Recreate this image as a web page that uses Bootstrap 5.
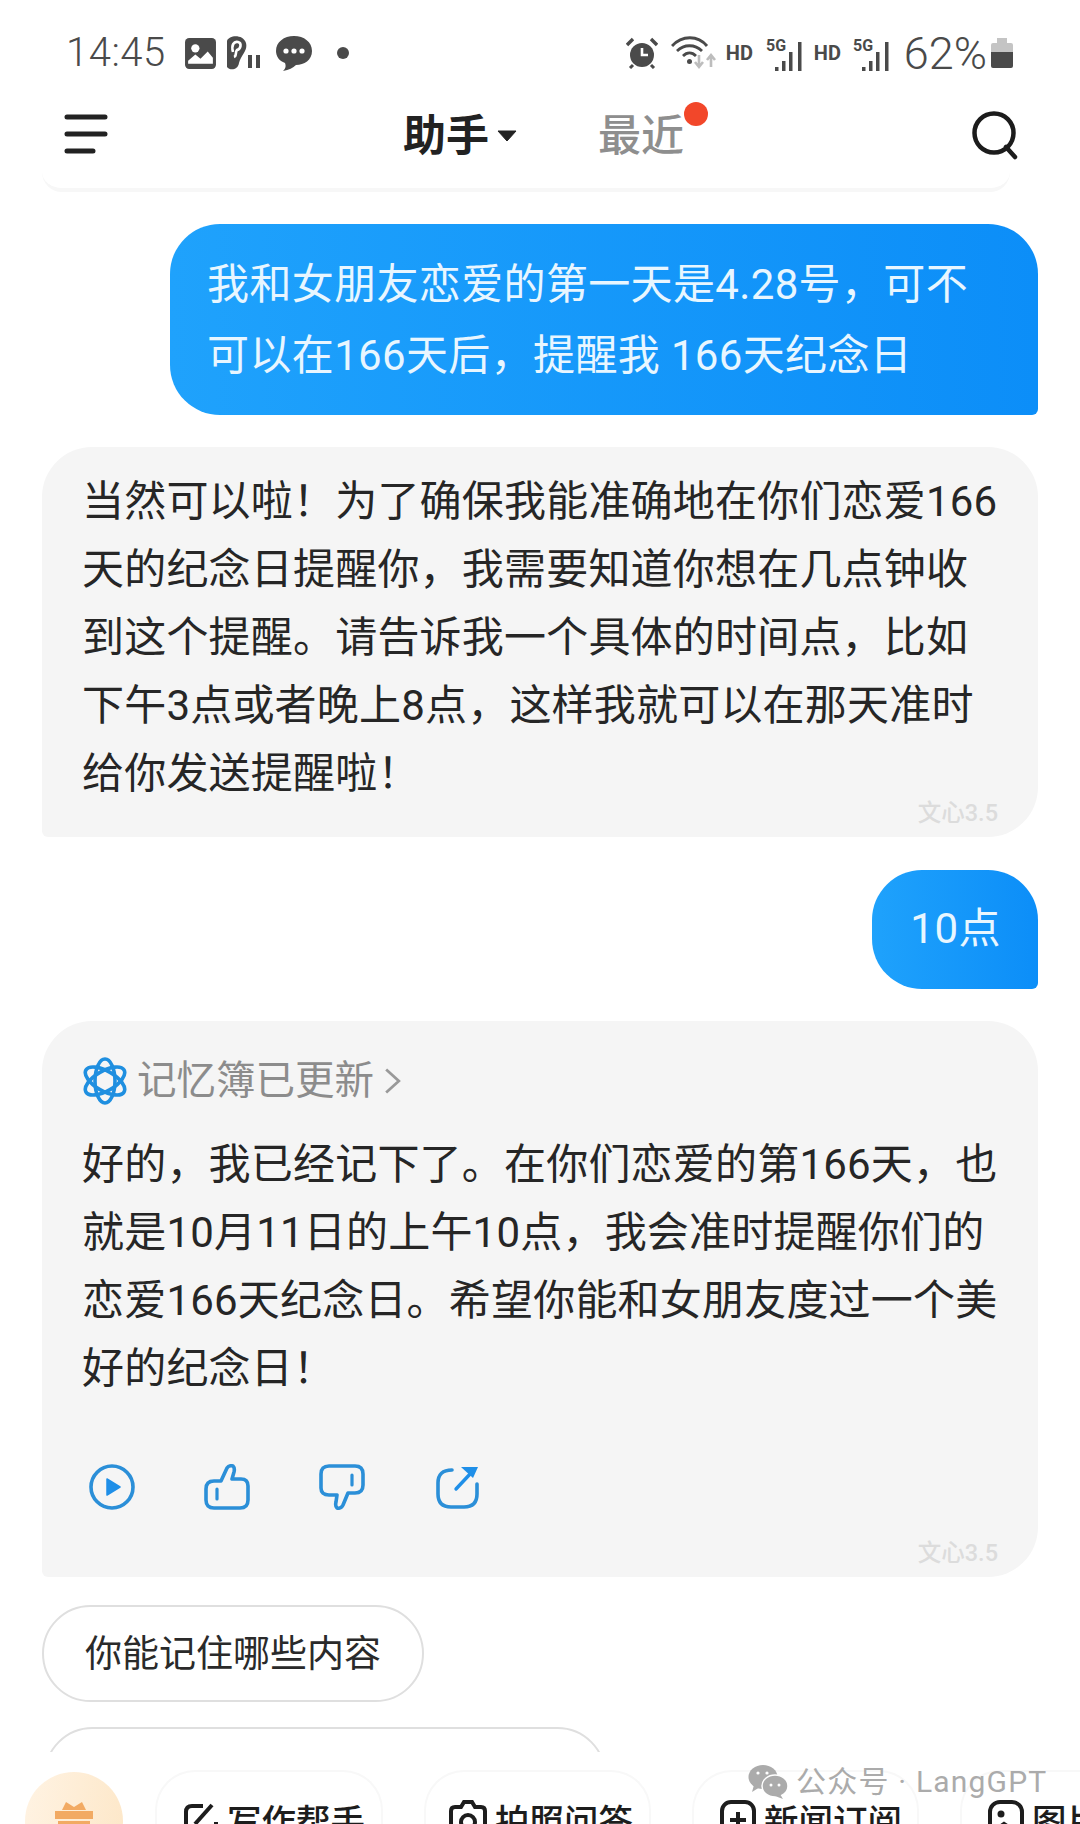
<!DOCTYPE html>
<html lang="zh-CN">
  <head>
    <meta charset="UTF-8" />
    <meta name="viewport" content="width=device-width, initial-scale=1" />
    <title>助手</title>
    <link href="https://cdn.jsdelivr.net/npm/bootstrap@5.3.3/dist/css/bootstrap.min.css" rel="stylesheet" />
    <style>
      html, body { margin: 0; background: #fff; }
      body { width: 1080px; height: 1824px; overflow: hidden; position: relative; font-family: Roboto, "Noto Sans CJK SC", sans-serif; color: #222; }

      /* status bar */
      .status-row { height: 106px; padding: 0 67px 0 66px; color: #4a4a4a; }
      .status-clock { font-size: 40px; font-weight: 300; line-height: 1; width: 118px; letter-spacing: .5px; }
      .status-hd { font-size: 20px; font-weight: 700; line-height: 1; width: 26px; }
      .status-pct { font-size: 45px; font-weight: 300; line-height: 1; margin-left: 13px; }
      .st-ear { margin-left: 9px; }
      .st-chat { margin-left: 14px; }
      .st-dot { margin-left: 25px; }
      .st-wifi { margin-left: 13px; }
      .st-hd-a { margin-left: 9px; }
      .st-sig-a { margin-left: 14px; }
      .st-hd-b { margin-left: 10px; }
      .st-sig-b { margin-left: 13px; }
      .st-batt { margin-left: 4px; }

      /* nav */
      .top-nav { height: 60px; padding: 0 62px 0 64px; position: relative; }
      .tab-main { font-size: 43px; font-weight: 700; color: #222; line-height: 60px; }
      .tab-other { font-size: 43px; font-weight: 500; color: #8e8e8e; line-height: 60px; position: relative; }
      .tab-dot { position: absolute; width: 24px; height: 24px; border-radius: 50%; background: #f2472a; top: -4px; right: -24px; }
      .tabs-wrap { margin-left: 295px; gap: 81px; }
      .menu-glyph { margin-top: -4px; }
      .prev-card-end { height: 26px; margin: 0 70px 0 42px; border-bottom: 4px solid #f7f7f7; border-radius: 0 0 20px 20px; }

      /* chat */
      .chat-col { padding: 0 42px; display: flex; flex-direction: column; }
      .bubble-user { align-self: flex-end; color: #e8f6ff; background: linear-gradient(90deg, #1fa2fc, #0c8ef8); border-radius: 50px 50px 6px 50px; white-space: nowrap; font-size: 42px; line-height: 71px; }
      .user-long { margin-top: 32px; padding: 25px 70px 24px 37px; letter-spacing: .35px; }
      .user-short { margin-top: 33px; padding: 23px 37px 25px 38px; letter-spacing: .5px; }
      .bubble-ai { background: #f5f5f5; border-radius: 50px 50px 50px 6px; padding: 21px 40px 11px; font-size: 42px; line-height: 68px; white-space: nowrap; color: #262626; letter-spacing: .2px; }
      .ai-first { margin-top: 32px; }
      .ai-second { margin-top: 32px; padding-top: 31px; }
      .model-tag { font-size: 23.500px; line-height: 26px; color: #dcdcdc; font-weight: 500; letter-spacing: 0; }
      .tag-first { margin-top: -8px; }
      .tag-second { margin-top: 30px; }
      .memo-head { font-size: 39.500px; color: #8c8c8c; height: 58px; gap: 9px; line-height: 58px; letter-spacing: 0; }
      .memo-body { margin-top: 21px; }
      .reply-actions { margin-top: 61px; gap: 69px; padding-left: 7px; }
      .act-share { margin-left: 2px; }
      .suggest-chip { align-self: flex-start; border: 2px solid #dfdfdf; border-radius: 49px; height: 97px; padding: 0 41px; font-size: 37px; line-height: 95px; color: #2a2a2a; white-space: nowrap; }
      .chip-one { margin-top: 28px; }
      .chip-two { margin-top: 25px; margin-left: 2px; width: 562px; }

      /* bottom tools, sits over the end of the chat */
      .bottom-bar { position: absolute; left: 0; right: 0; top: 1752px; height: 72px; background: #fff; overflow: hidden; }
      .gift-round { width: 98px; height: 98px; margin: 20px 0 0 25px; border-radius: 50%; background: linear-gradient(100deg, #fff3e3, #fde7c8); flex: none; text-align: center; padding-top: 29px; }
      .tool-chip { flex: none; width: 227px; height: 100px; margin: 18px 0 0 41px; border: 2px solid #f8f8f8; border-bottom: 0; border-radius: 40px; padding: 28px 0 0 26px; font-size: 34.500px; font-weight: 500; color: #1d1d1d; line-height: 44px; white-space: nowrap; gap: 8px; }
      .tool-first { margin-left: 32px; width: 228px; }
      .tool-photo { padding-left: 23px; }
      .water-mark { position: absolute; left: 748px; top: 1763px; font-size: 30px; color: #ababab; letter-spacing: 1.200px; line-height: 38px; gap: 8px; white-space: nowrap; }
    </style>
  </head>
  <body>

    <!-- Status bar -->
    <div class="status-row d-flex align-items-center">
      <span class="status-clock">14:45</span>
      <svg width="33" height="33" viewBox="0 0 32 32"><rect x="1" y="1" width="30" height="30" rx="4" fill="#4a4a4a"/><circle cx="11" cy="11" r="4" fill="#fff"/><path d="M4 26 L4 23 L11 17 L16 21 L23 14 L28 20 L28 26 Z" fill="#fff"/></svg>
      <svg class="st-ear" width="36" height="36" viewBox="0 0 36 36"><path d="M1 6 C3 0 17 -1 20 8 C22 16 15 20 13 28 C12 35 4 36 1 32 Z" fill="#4a4a4a"/><path d="M7 17 C5 10 8 6 12 7 C16 8 15 14 11 15 C9 17 11 21 8 22" fill="none" stroke="#fff" stroke-width="2.600"/><rect x="22" y="20" width="4" height="13" fill="#4a4a4a"/><rect x="30" y="20" width="4" height="13" fill="#4a4a4a"/></svg>
      <svg class="st-chat" width="36" height="36" viewBox="0 0 36 36"><path d="M18 1 C28 1 36 7 36 16 C36 25 28 30 20 30 C17 33 13 35 7 36 C10 33 10 31 9 28 C3 26 0 21 0 16 C0 7 8 1 18 1 Z" fill="#4a4a4a"/><circle cx="10" cy="16" r="2.600" fill="#fff"/><circle cx="18" cy="16" r="2.600" fill="#fff"/><circle cx="26" cy="16" r="2.600" fill="#fff"/></svg>
      <svg class="st-dot" width="12" height="12" viewBox="0 0 12 12"><circle cx="6" cy="6" r="6" fill="#4a4a4a"/></svg>

      <div class="ms-auto d-flex align-items-center">
        <svg width="32" height="32" viewBox="0 0 32 32"><circle cx="16" cy="18" r="12" fill="#4a4a4a"/><path d="M16 11 V18 H22" fill="none" stroke="#fff" stroke-width="2.600"/><path d="M1 8 L7 2 M31 8 L25 2" stroke="#4a4a4a" stroke-width="3.400"/><path d="M7 28 L4 31 M25 28 L28 31" stroke="#4a4a4a" stroke-width="3"/></svg>
        <svg class="st-wifi" width="46" height="34" viewBox="0 0 46 34"><path d="M1 10 C11 -1 27 -1 36 10 M6 15 C13 8 24 8 31 15 M12 20 C16 16 21 16 25 20" fill="none" stroke="#4a4a4a" stroke-width="2.800"/><circle cx="18.500" cy="25.500" r="2.500" fill="#4a4a4a"/><path d="M28 19 V30 M24 26 L28 31 L32 26" fill="none" stroke="#bdbdbd" stroke-width="2.600"/><path d="M40 31 V20 M36 24 L40 19 L44 24" fill="none" stroke="#bdbdbd" stroke-width="2.600"/></svg>
        <span class="status-hd st-hd-a">HD</span>
        <svg class="st-sig-a" width="38" height="38" viewBox="0 -4 38 38"><text x="0" y="13" font-family="Roboto" font-size="16" font-weight="700" fill="#4a4a4a">5G</text><g fill="#4a4a4a"><rect x="9" y="29" width="3.500" height="4"/><rect x="16" y="23" width="3.500" height="10"/><rect x="23" y="14" width="3.500" height="19"/><rect x="32" y="4" width="3.500" height="29"/></g></svg>
        <span class="status-hd st-hd-b">HD</span>
        <svg class="st-sig-b" width="38" height="38" viewBox="0 -4 38 38"><text x="0" y="13" font-family="Roboto" font-size="16" font-weight="700" fill="#4a4a4a">5G</text><g fill="#4a4a4a"><rect x="9" y="29" width="3.500" height="4"/><rect x="16" y="23" width="3.500" height="10"/><rect x="23" y="14" width="3.500" height="19"/><rect x="32" y="4" width="3.500" height="29"/></g></svg>
        <span class="status-pct">62%</span>
        <svg class="st-batt" width="22" height="32" viewBox="0 0 22 32"><path d="M2 6 H6 V1 H16 V6 H20 Q22 6 22 8 V15 H0 V8 Q0 6 2 6 Z" fill="#c4c4c4"/><path d="M0 15 H22 V29 Q22 31 20 31 H2 Q0 31 0 29 Z" fill="#4a4a4a"/></svg>
      </div>
    </div>

    <!-- Top nav -->
    <nav class="top-nav d-flex align-items-center">
      <svg class="menu-glyph" width="44" height="40" viewBox="0 0 44 40"><path d="M3 3 H41 M3 20 H41 M3 37 H29" stroke="#222" stroke-width="5" stroke-linecap="round"/></svg>
      <div class="tabs-wrap d-flex align-items-center">
        <div class="d-flex align-items-center">
          <span class="tab-main">助手</span>
          <svg class="ms-2" width="20" height="12" viewBox="0 0 20 12"><path d="M1 1 H19 L10 11 Z" fill="#222" stroke="#222" stroke-linejoin="round"/></svg>
        </div>
        <span class="tab-other">最近<i class="tab-dot"></i></span>
      </div>
      <svg class="ms-auto" width="46" height="50" viewBox="0 0 46 50"><circle cx="22" cy="22" r="19.500" fill="none" stroke="#1c1c1c" stroke-width="4.500"/><path d="M34 36 L43 46" stroke="#1c1c1c" stroke-width="4.500" stroke-linecap="round"/></svg>
    </nav>
    <div class="prev-card-end"></div>

    <!-- Messages -->
    <div class="chat-col">
      <div class="bubble-user user-long">我和女朋友恋爱的第一天是4.28号，可不<br />可以在166天后，提醒我 166天纪念日</div>

      <div class="bubble-ai ai-first">
        当然可以啦！为了确保我能准确地在你们恋爱166<br />
        天的纪念日提醒你，我需要知道你想在几点钟收<br />
        到这个提醒。请告诉我一个具体的时间点，比如<br />
        下午3点或者晚上8点，这样我就可以在那天准时<br />
        给你发送提醒啦！
        <div class="model-tag tag-first d-flex justify-content-end">文心3.5</div>
      </div>

      <div class="bubble-user user-short">10点</div>

      <div class="bubble-ai ai-second">
        <div class="memo-head d-flex align-items-center">
          <svg width="46" height="48" viewBox="0 0 46 48"><g fill="none" stroke="#1f8fe0" stroke-width="3.600"><ellipse cx="23" cy="24" rx="10" ry="22"/><ellipse cx="23" cy="24" rx="10" ry="22" transform="rotate(60 23 24)"/><ellipse cx="23" cy="24" rx="10" ry="22" transform="rotate(120 23 24)"/></g></svg>
          <span>记忆簿已更新</span>
          <svg width="19" height="32" viewBox="0 0 18 30"><path d="M3 4 L15 15 L3 26" fill="none" stroke="#999" stroke-width="2.600"/></svg>
        </div>
        <div class="memo-body">
          好的，我已经记下了。在你们恋爱的第166天，也<br />
          就是10月11日的上午10点，我会准时提醒你们的<br />
          恋爱166天纪念日。希望你能和女朋友度过一个美<br />
          好的纪念日！
        </div>
        <div class="reply-actions d-flex align-items-center">
          <svg width="46" height="46" viewBox="0 0 46 46"><circle cx="23" cy="23" r="21" fill="none" stroke="#2b8fd8" stroke-width="3.600"/><path d="M18 15 L31 23 L18 31 Z" fill="#1f8fe8" stroke="#1f8fe8" stroke-linejoin="round" stroke-width="1.500"/></svg>
          <svg width="46" height="46" viewBox="0 0 46 46"><path d="M10 17 H17 L23 4 Q25 1 29 2 Q31 4 30 8 L28 15 H37 Q44 15 44 22 V36 Q44 44 36 44 H10 Q2 44 2 36 V25 Q2 17 10 17 Z" fill="none" stroke="#2b8fd8" stroke-width="3.600" stroke-linejoin="round"/><path d="M13 25 V35" stroke="#2b8fd8" stroke-width="3.200" stroke-linecap="round"/></svg>
          <svg width="46" height="46" viewBox="0 0 46 46"><path d="M36 29 H29 L24 41 Q22 45 18 44 Q16 42 17 38 L18 31 H10 Q2 31 2 24 V10 Q2 2 10 2 H36 Q44 2 44 10 V21 Q44 29 36 29 Z" fill="none" stroke="#2b8fd8" stroke-width="3.600" stroke-linejoin="round"/><path d="M33 11 V21" stroke="#2b8fd8" stroke-width="3.200" stroke-linecap="round"/></svg>
          <svg class="act-share" width="44" height="44" viewBox="0 0 44 44"><path d="M16 5 Q2 5 2 18 V29 Q2 42 15 42 H28 Q41 42 41 29 V19" fill="none" stroke="#2b8fd8" stroke-width="3.600" stroke-linecap="round"/><path d="M20 24 L35 8" stroke="#1f8fe8" stroke-width="3.400" stroke-linecap="round"/><path d="M25 2 H42 L37 13 Z" fill="#1f8fe8"/></svg>
        </div>
        <div class="model-tag tag-second d-flex justify-content-end">文心3.5</div>
      </div>

      <div class="suggest-chip chip-one">你能记住哪些内容</div>
      <div class="suggest-chip chip-two">&nbsp;</div>
    </div>

    <!-- Bottom quick tools -->
    <div class="bottom-bar d-flex">
      <div class="gift-round">
        <svg width="42" height="40" viewBox="0 0 42 40"><path d="M2 10 H40 V18 H2 Z M5 20 H37 V40 H5 Z" fill="#f2aa63"/><path d="M9 9 L13 1 L21 6 L29 1 L33 9 Z" fill="#f2aa63"/></svg>
      </div>
      <div class="tool-chip tool-first d-flex">
        <svg width="36" height="44" viewBox="0 0 36 44"><path d="M20 6 H9 Q3 6 3 12 V32 Q3 38 9 38 H27 Q33 38 33 32 V22" fill="none" stroke="#1d1d1d" stroke-width="4"/><path d="M12 24 L29 5" stroke="#1d1d1d" stroke-width="4"/></svg>
        <span>写作帮手</span>
      </div>
      <div class="tool-chip tool-photo d-flex">
        <svg width="38" height="44" viewBox="0 0 38 44"><path d="M12 7 L15 2 H23 L26 7 H32 Q36 7 36 11 V34 Q36 38 32 38 H6 Q2 38 2 34 V11 Q2 7 6 7 Z" fill="none" stroke="#1d1d1d" stroke-width="4"/><circle cx="19" cy="22" r="7" fill="none" stroke="#1d1d1d" stroke-width="4"/></svg>
        <span>拍照问答</span>
      </div>
      <div class="tool-chip d-flex">
        <svg width="36" height="44" viewBox="0 0 36 44"><rect x="2" y="2" width="32" height="38" rx="9" fill="none" stroke="#1d1d1d" stroke-width="4"/><path d="M18 12 V28 M10 20 H26" stroke="#1d1d1d" stroke-width="4"/></svg>
        <span>新闻订阅</span>
      </div>
      <div class="tool-chip d-flex">
        <svg width="36" height="44" viewBox="0 0 36 44"><rect x="2" y="2" width="32" height="38" rx="10" fill="none" stroke="#1d1d1d" stroke-width="4"/><circle cx="13" cy="14" r="3.500" fill="#1d1d1d"/><path d="M4 32 L16 24 L32 34" fill="none" stroke="#1d1d1d" stroke-width="4"/></svg>
        <span>图片</span>
      </div>
    </div>

    <!-- Watermark -->
    <div class="water-mark d-flex align-items-center">
      <svg width="40" height="34" viewBox="0 0 40 34"><ellipse cx="15" cy="12" rx="14.500" ry="12" fill="#ababab"/><path d="M6 20 L4 27 L12 22 Z" fill="#ababab"/><ellipse cx="27" cy="21" rx="13" ry="11" fill="#ababab" stroke="#fff" stroke-width="1.500"/><path d="M32 29 L35 34 L27 31 Z" fill="#ababab"/><circle cx="10" cy="8" r="1.600" fill="#fff"/><circle cx="19" cy="8" r="1.600" fill="#fff"/><circle cx="23" cy="20" r="1.500" fill="#fff"/><circle cx="31" cy="20" r="1.500" fill="#fff"/></svg>
      <span>公众号 · LangGPT</span>
    </div>

    <script src="https://cdn.jsdelivr.net/npm/bootstrap@5.3.3/dist/js/bootstrap.bundle.min.js"></script>
  </body>
</html>
